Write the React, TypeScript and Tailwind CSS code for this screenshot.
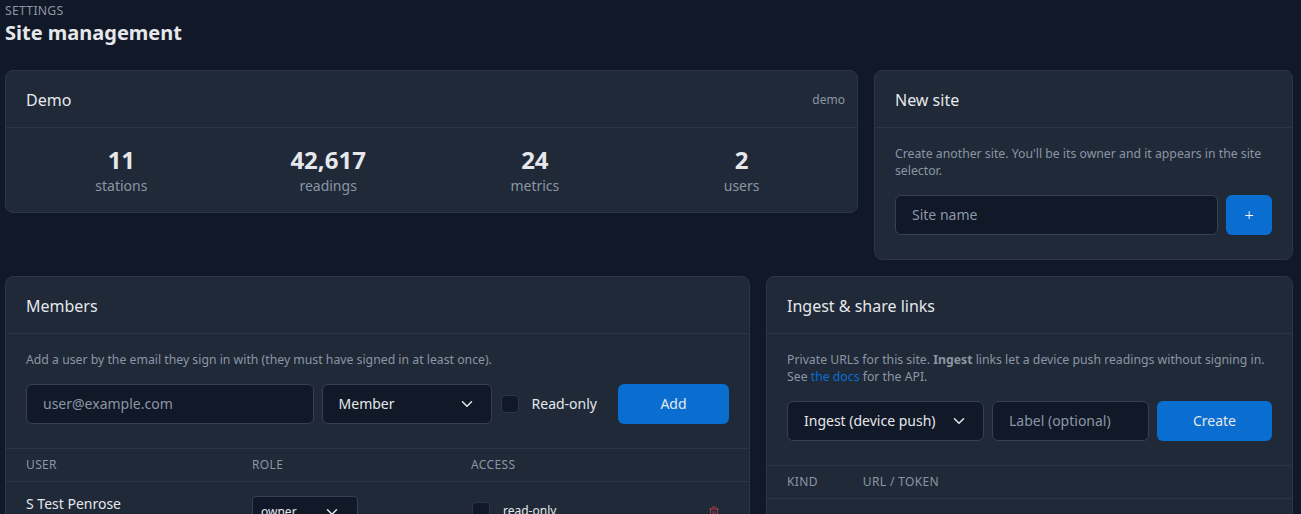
import { ChevronDown, Trash2 } from "lucide-react";

const font = { fontFamily: '"Noto Sans", sans-serif' };

function CardHeader({ title, right }: { title: string; right?: string }) {
  return (
    <div className="flex h-[57px] items-center justify-between border-b border-[#2a3646] pl-5 pr-3 pt-[2px]">
      <h2 className="text-base font-normal leading-6 text-[#e5e7eb]">{title}</h2>
      {right && <span className="text-xs text-[#8b96a5]">{right}</span>}
    </div>
  );
}

function Stat({ value, label }: { value: string; label: string }) {
  return (
    <div className="flex flex-col items-center">
      <div className="text-2xl font-bold leading-[30px] text-[#e5e7eb]">{value}</div>
      <div className="text-sm leading-[21px] text-[#8b96a5]">{label}</div>
    </div>
  );
}

const fieldClass =
  "h-10 rounded-md border border-[#374151] bg-[#111827] px-4 pb-[2px] text-sm text-[#e5e7eb] outline-none placeholder:text-[#8b96a5]";

function SelectBox({ label, className }: { label: string; className: string }) {
  return (
    <div className={`flex h-10 items-center justify-between rounded-md border border-[#374151] bg-[#111827] pl-4 pr-[15px] text-sm text-[#e5e7eb] ${className}`}>
      <span>{label}</span>
      <ChevronDown size={18} strokeWidth={2} className="text-[#e5e7eb]" />
    </div>
  );
}

function TableHead({ children, className }: { children: React.ReactNode; className: string }) {
  return (
    <div className={`h-[33px] items-center border-b border-[#2a3646] px-5 text-xs tracking-[0.03em] text-[#8b96a5] ${className}`}>
      {children}
    </div>
  );
}

export default function App() {
  return (
    <div style={font} className="h-[514px] overflow-hidden bg-[#111827] pl-[5px] pr-2">
      <header className="h-[70px] pt-[3px]">
        <div className="text-[12.25px] uppercase leading-4 tracking-[0.02em] text-[#8b96a5]">Settings</div>
        <h1 className="text-xl font-bold leading-[28px] text-[#e5e7eb]">Site management</h1>
      </header>

      <div className="grid grid-cols-[853px_1fr] items-start gap-4">
        <section className="rounded-lg border border-[#2a3646] bg-[#1f2937]">
          <CardHeader title="Demo" right="demo" />
          <div className="grid h-[84px] grid-cols-4 content-center px-3">
            <Stat value="11" label="stations" />
            <Stat value="42,617" label="readings" />
            <Stat value="24" label="metrics" />
            <Stat value="2" label="users" />
          </div>
        </section>

        <section className="rounded-lg border border-[#2a3646] bg-[#1f2937] pb-6">
          <CardHeader title="New site" />
          <div className="px-5 pt-[17px]">
            <p className="mb-4 text-[12.25px] leading-[17px] text-[#8b96a5]">
              Create another site. You'll be its owner and it appears in the site selector.
            </p>
            <div className="flex gap-2">
              <input placeholder="Site name" className={`${fieldClass} min-w-0 flex-1`} />
              <button className="h-10 w-[46px] rounded-md bg-[#0a6ed1] text-base font-light text-white">+</button>
            </div>
          </div>
        </section>
      </div>

      <div className="mt-4 grid grid-cols-[745px_1fr] items-start gap-4">
        <section className="rounded-lg border border-[#2a3646] bg-[#1f2937]">
          <CardHeader title="Members" />
          <div className="border-b border-[#2a3646] px-5 pb-6 pt-[17px]">
            <p className="mb-4 text-[12.25px] leading-[17px] text-[#8b96a5]">
              Add a user by the email they sign in with (they must have signed in at least once).
            </p>
            <div className="flex items-center gap-2">
              <input placeholder="user@example.com" className={`${fieldClass} min-w-0 flex-1`} />
              <SelectBox label="Member" className="w-[170px]" />
              <label className="ml-px mr-[13px] flex items-center gap-[13px] text-sm text-[#e5e7eb]">
                <span className="h-[18px] w-[18px] rounded border border-[#2a3646] bg-[#111827]" />
                Read-only
              </label>
              <button className="h-10 w-[111px] rounded-md bg-[#0a6ed1] text-sm text-[#e5e7eb]">Add</button>
            </div>
          </div>
          <TableHead className="grid grid-cols-[226px_219px_1fr]">
            <span>USER</span>
            <span>ROLE</span>
            <span>ACCESS</span>
          </TableHead>
          <div className="grid grid-cols-[226px_219px_1fr_auto] items-start px-5 pt-[14px]">
            <div className="text-sm leading-[16px] text-[#e5e7eb]">S Test Penrose</div>
            <div className="flex h-8 w-[106px] items-center justify-between rounded border border-[#374151] bg-[#111827] pl-2 pr-4 text-xs text-[#e5e7eb]">
              <span>owner</span>
              <ChevronDown size={18} />
            </div>
            <div className="flex items-center gap-[13px] pt-[6px] text-xs text-[#e5e7eb]">
              <span className="ml-px h-[18px] w-[18px] rounded border border-[#2a3646] bg-[#111827]" />
              read-only
            </div>
            <Trash2 size={12} className="mr-[9px] mt-[10px] text-[#9f3a44]" />
          </div>
        </section>

        <section className="rounded-lg border border-[#2a3646] bg-[#1f2937]">
          <CardHeader title="Ingest &amp; share links" />
          <div className="border-b border-[#2a3646] px-5 pb-6 pt-[17px]">
            <p className="mb-4 text-[12.25px] leading-[17px] text-[#8b96a5]">
              Private URLs for this site. <strong className="font-bold">Ingest</strong> links let a device push readings without signing in. See{" "}
              <a className="text-[#0a6ed1]">the docs</a> for the API.
            </p>
            <div className="flex gap-2">
              <SelectBox label="Ingest (device push)" className="w-[197px]" />
              <input placeholder="Label (optional)" className={`${fieldClass} w-[157px]`} />
              <button className="h-10 flex-1 rounded-md bg-[#0a6ed1] text-sm text-[#e5e7eb]">Create</button>
            </div>
          </div>
          <TableHead className="flex gap-[45px]">
            <span>KIND</span>
            <span>URL / TOKEN</span>
          </TableHead>
          <div className="h-16" />
        </section>
      </div>
    </div>
  );
}
